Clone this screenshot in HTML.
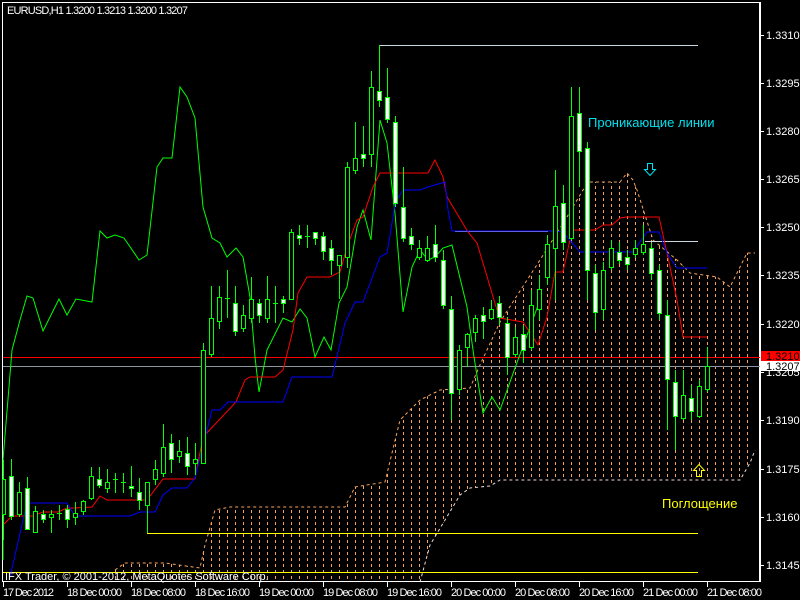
<!DOCTYPE html>
<html><head><meta charset="utf-8"><style>
html,body{margin:0;padding:0;background:#000;width:800px;height:600px;overflow:hidden}
svg{display:block}
text{font-family:"Liberation Sans",sans-serif;font-size:11px;fill:#fff}
</style></head><body>
<svg width="800" height="600" xmlns="http://www.w3.org/2000/svg">
<defs>
<pattern id="cl" width="8" height="6" patternUnits="userSpaceOnUse" x="3" y="0">
<rect x="0" y="0" width="1" height="3" fill="#f4a460"/>
</pattern>
</defs>
<rect width="800" height="600" fill="#000"/>
<polygon fill="url(#cl)" points="115,570 125,563 165,563 200,568 205,545 215,510 230,507 345,507 355,487 385,482 400,420 420,400 440,390 470,388 480,365 500,322 540,260 567,217 583,190 590,182 620,182 627,173 633,180 637,190 653,240 677,260 690,273 717,277 730,287 747,253 755,253 755,450 750,463 740,480 500,480 490,486 470,488 460,495 430,545 420,582 115,582"/>
<polyline fill="none" stroke="#f4a460" stroke-dasharray="3,3" points="115,570 125,563 165,563 200,568 205,545 215,510 230,507 345,507 355,487 385,482 400,420 420,400 440,390 470,388 480,365 500,322 540,260 567,217 583,190 590,182 620,182 627,173 633,180 637,190 653,240 677,260 690,273 717,277 730,287 747,253 755,253"/>
<polyline fill="none" stroke="#f0d8d8" stroke-dasharray="3,3" points="420,582 430,545 460,495 470,488 490,486 500,480 740,480 750,463 755,450"/>
<rect x="2.5" y="2.5" width="757" height="579" fill="none" stroke="#fff"/>
<line x1="3" y1="357.5" x2="760" y2="357.5" stroke="#ff0000"/>
<line x1="3" y1="366.5" x2="760" y2="366.5" stroke="#8c96a0"/>
<polyline fill="none" stroke="#c8d8e0" points="379.5,60 379.5,45.5 698,45.5"/>
<line x1="455" y1="231.5" x2="548" y2="231.5" stroke="#c0c0c0"/>
<line x1="645" y1="241.5" x2="698" y2="241.5" stroke="#c8d8e0"/>
<polyline fill="none" stroke="#ffff00" points="147.5,510 147.5,533.5 698,533.5"/>
<line x1="3" y1="572.5" x2="698" y2="572.5" stroke="#ffff00"/>
<polyline fill="none" stroke="#00ff00" points="3,560 3,460 12,350 20,320 27,296 33,298 43,331 59,299 67,315 76,299 92,302 100,231 107,238 115,235 124,238 139,260 147,255 157,167 163,158 172,158 180,87 187,97 195,118 203,207 212,238 220,243 227,257 236,248 243,257 250,297 255,357 259,392 267,350 283,318 292,322 300,309 307,318 315,357 324,337 331,350 339,303 347,287 357,227 363,210 371,240 380,120 387,143 395,213 403,312 412,267 420,250 428,260 435,257 443,248 452,245 467,307 474,357 483,413 492,397 500,410 515,368 540,300"/>
<polyline fill="none" stroke="#ff0000" points="3,525 12,516 33,516 43,512 58,512 67,508 75,508 92,507 100,496 107,500 147,500 163,479 195,479 203,437 236,402 245,380 250,377 275,377 283,370 293,330 298,293 307,277 330,277 340,272 347,247 357,220 363,217 373,187 380,173 428,173 435,160 443,177 447,197 468,232 477,243 497,310 500,318 523,322 538,345 547,317 555,272 563,272 572,230 595,230 603,225 612,225 620,218 627,217 659,217 667,253 677,300 683,337 707,337"/>
<polyline fill="none" stroke="#0000ff" points="10,577 27,503 67,503 75,516 130,516 140,512 155,512 163,495 172,488 187,488 195,478 212,410 220,410 228,402 283,402 292,377 332,377 345,323 355,302 363,302 380,257 387,253 393,217 395,203 403,190 420,190 428,187 445,182 448,210 452,231 555,231 563,232 580,252 633,252 647,232 659,232 667,253 677,268 707,268"/>
<g stroke="#00ff00" stroke-width="1">
<line x1="3.5" y1="460" x2="3.5" y2="540"/><rect x="2.5" y="479.5" width="3" height="35" fill="#000"/>
<line x1="11.5" y1="459" x2="11.5" y2="520"/><rect x="9.5" y="476.5" width="4" height="40" fill="#fff"/>
<line x1="19.5" y1="482" x2="19.5" y2="517"/><rect x="17.5" y="492.5" width="4" height="22" fill="#000"/>
<line x1="27.5" y1="477" x2="27.5" y2="530"/><rect x="25.5" y="488.5" width="4" height="41" fill="#fff"/>
<line x1="35.5" y1="506" x2="35.5" y2="533"/><rect x="33.5" y="511.5" width="4" height="21" fill="#000"/>
<line x1="43.5" y1="510" x2="43.5" y2="523"/><rect x="41.5" y="514.5" width="4" height="5" fill="#fff"/>
<line x1="51.5" y1="510" x2="51.5" y2="533"/><rect x="49.5" y="514.5" width="4" height="3" fill="#000"/>
<line x1="59.5" y1="505" x2="59.5" y2="520"/><line x1="57" y1="513.5" x2="62" y2="513.5"/>
<line x1="67.5" y1="505" x2="67.5" y2="528"/><rect x="65.5" y="509.5" width="4" height="10" fill="#fff"/>
<line x1="75.5" y1="502" x2="75.5" y2="525"/><rect x="73.5" y="513.5" width="4" height="4" fill="#000"/>
<line x1="83.5" y1="500" x2="83.5" y2="515"/><rect x="81.5" y="501.5" width="4" height="10" fill="#000"/>
<line x1="91.5" y1="467" x2="91.5" y2="500"/><rect x="89.5" y="476.5" width="4" height="22" fill="#000"/>
<line x1="99.5" y1="467" x2="99.5" y2="488"/><rect x="97.5" y="479.5" width="4" height="6" fill="#fff"/>
<line x1="107.5" y1="469" x2="107.5" y2="493"/><rect x="105.5" y="482.5" width="4" height="6" fill="#000"/>
<line x1="115.5" y1="473" x2="115.5" y2="493"/><line x1="113" y1="479.5" x2="118" y2="479.5"/>
<line x1="123.5" y1="473" x2="123.5" y2="493"/><line x1="121" y1="482.5" x2="126" y2="482.5"/>
<line x1="131.5" y1="466" x2="131.5" y2="497"/><rect x="129.5" y="486.5" width="4" height="2" fill="#fff"/>
<line x1="139.5" y1="478" x2="139.5" y2="510"/><rect x="137.5" y="492.5" width="4" height="8" fill="#fff"/>
<line x1="147.5" y1="482" x2="147.5" y2="533"/><rect x="145.5" y="482.5" width="4" height="23" fill="#000"/>
<line x1="155.5" y1="460" x2="155.5" y2="485"/><rect x="153.5" y="469.5" width="4" height="10" fill="#000"/>
<line x1="163.5" y1="424" x2="163.5" y2="477"/><rect x="161.5" y="447.5" width="4" height="26" fill="#000"/>
<line x1="171.5" y1="434" x2="171.5" y2="473"/><rect x="169.5" y="443.5" width="4" height="16" fill="#fff"/>
<line x1="179.5" y1="440" x2="179.5" y2="463"/><rect x="177.5" y="451.5" width="4" height="5" fill="#000"/>
<line x1="187.5" y1="437" x2="187.5" y2="475"/><rect x="185.5" y="453.5" width="4" height="13" fill="#fff"/>
<line x1="195.5" y1="443" x2="195.5" y2="475"/><rect x="193.5" y="459.5" width="4" height="4" fill="#000"/>
<line x1="203.5" y1="343" x2="203.5" y2="463"/><rect x="201.5" y="350.5" width="4" height="113" fill="#000"/>
<line x1="211.5" y1="286" x2="211.5" y2="357"/><rect x="209.5" y="318.5" width="4" height="36" fill="#000"/>
<line x1="219.5" y1="286" x2="219.5" y2="329"/><rect x="217.5" y="297.5" width="4" height="24" fill="#000"/>
<line x1="227.5" y1="270" x2="227.5" y2="318"/><line x1="225" y1="298.5" x2="230" y2="298.5"/>
<line x1="235.5" y1="286" x2="235.5" y2="336"/><rect x="233.5" y="303.5" width="4" height="28" fill="#fff"/>
<line x1="243.5" y1="305" x2="243.5" y2="332"/><rect x="241.5" y="315.5" width="4" height="13" fill="#000"/>
<line x1="251.5" y1="277" x2="251.5" y2="323"/><rect x="249.5" y="299.5" width="4" height="19" fill="#000"/>
<line x1="259.5" y1="299" x2="259.5" y2="323"/><rect x="257.5" y="303.5" width="4" height="12" fill="#fff"/>
<line x1="267.5" y1="276" x2="267.5" y2="323"/><rect x="265.5" y="299.5" width="4" height="19" fill="#000"/>
<line x1="275.5" y1="286" x2="275.5" y2="323"/><line x1="273" y1="303.5" x2="278" y2="303.5"/>
<line x1="283.5" y1="296" x2="283.5" y2="313"/><rect x="281.5" y="299.5" width="4" height="4" fill="#fff"/>
<line x1="291.5" y1="229" x2="291.5" y2="299"/><rect x="289.5" y="232.5" width="4" height="67" fill="#000"/>
<line x1="299.5" y1="225" x2="299.5" y2="245"/><rect x="297.5" y="235.5" width="4" height="3" fill="#fff"/>
<line x1="307.5" y1="225" x2="307.5" y2="248"/><line x1="305" y1="236.5" x2="310" y2="236.5"/>
<line x1="315.5" y1="232" x2="315.5" y2="245"/><rect x="313.5" y="232.5" width="4" height="6" fill="#fff"/>
<line x1="323.5" y1="232" x2="323.5" y2="260"/><rect x="321.5" y="236.5" width="4" height="15" fill="#fff"/>
<line x1="331.5" y1="240" x2="331.5" y2="275"/><rect x="329.5" y="248.5" width="4" height="12" fill="#fff"/>
<line x1="339.5" y1="255" x2="339.5" y2="299"/><rect x="337.5" y="255.5" width="4" height="10" fill="#000"/>
<line x1="347.5" y1="162" x2="347.5" y2="268"/><rect x="345.5" y="167.5" width="4" height="90" fill="#000"/>
<line x1="355.5" y1="122" x2="355.5" y2="174"/><rect x="353.5" y="158.5" width="4" height="12" fill="#000"/>
<line x1="363.5" y1="126" x2="363.5" y2="167"/><rect x="361.5" y="154.5" width="4" height="4" fill="#fff"/>
<line x1="371.5" y1="71" x2="371.5" y2="167"/><rect x="369.5" y="87.5" width="4" height="67" fill="#000"/>
<line x1="379.5" y1="45" x2="379.5" y2="107"/><rect x="377.5" y="91.5" width="4" height="9" fill="#fff"/>
<line x1="387.5" y1="68" x2="387.5" y2="123"/><rect x="385.5" y="97.5" width="4" height="22" fill="#fff"/>
<line x1="395.5" y1="116" x2="395.5" y2="207"/><rect x="393.5" y="122.5" width="4" height="81" fill="#fff"/>
<line x1="403.5" y1="167" x2="403.5" y2="242"/><rect x="401.5" y="207.5" width="4" height="31" fill="#fff"/>
<line x1="411.5" y1="228" x2="411.5" y2="250"/><rect x="409.5" y="236.5" width="4" height="8" fill="#fff"/>
<line x1="419.5" y1="240" x2="419.5" y2="260"/><rect x="417.5" y="248.5" width="4" height="9" fill="#000"/>
<line x1="427.5" y1="236" x2="427.5" y2="262"/><rect x="425.5" y="248.5" width="4" height="12" fill="#000"/>
<line x1="435.5" y1="225" x2="435.5" y2="262"/><rect x="433.5" y="244.5" width="4" height="13" fill="#fff"/>
<line x1="443.5" y1="250" x2="443.5" y2="309"/><rect x="441.5" y="260.5" width="4" height="45" fill="#fff"/>
<line x1="451.5" y1="296" x2="451.5" y2="420"/><rect x="449.5" y="309.5" width="4" height="84" fill="#fff"/>
<line x1="459.5" y1="345" x2="459.5" y2="395"/><rect x="457.5" y="350.5" width="4" height="39" fill="#000"/>
<line x1="467.5" y1="333" x2="467.5" y2="367"/><rect x="465.5" y="334.5" width="4" height="13" fill="#000"/>
<line x1="475.5" y1="315" x2="475.5" y2="342"/><rect x="473.5" y="318.5" width="4" height="14" fill="#000"/>
<line x1="483.5" y1="307" x2="483.5" y2="339"/><rect x="481.5" y="315.5" width="4" height="6" fill="#fff"/>
<line x1="491.5" y1="300" x2="491.5" y2="320"/><rect x="489.5" y="309.5" width="4" height="9" fill="#000"/>
<line x1="499.5" y1="296" x2="499.5" y2="325"/><rect x="497.5" y="303.5" width="4" height="14" fill="#fff"/>
<line x1="507.5" y1="317" x2="507.5" y2="375"/><rect x="505.5" y="323.5" width="4" height="34" fill="#fff"/>
<line x1="515.5" y1="327" x2="515.5" y2="357"/><rect x="513.5" y="337.5" width="4" height="17" fill="#000"/>
<line x1="523.5" y1="325" x2="523.5" y2="363"/><rect x="521.5" y="334.5" width="4" height="16" fill="#fff"/>
<line x1="531.5" y1="290" x2="531.5" y2="350"/><rect x="529.5" y="305.5" width="4" height="42" fill="#000"/>
<line x1="539.5" y1="275" x2="539.5" y2="320"/><rect x="537.5" y="289.5" width="4" height="20" fill="#000"/>
<line x1="547.5" y1="235" x2="547.5" y2="285"/><rect x="545.5" y="244.5" width="4" height="33" fill="#000"/>
<line x1="555.5" y1="170" x2="555.5" y2="300"/><rect x="553.5" y="206.5" width="4" height="42" fill="#000"/>
<line x1="563.5" y1="185" x2="563.5" y2="250"/><rect x="561.5" y="203.5" width="4" height="39" fill="#fff"/>
<line x1="571.5" y1="87" x2="571.5" y2="240"/><rect x="569.5" y="116.5" width="4" height="122" fill="#000"/>
<line x1="579.5" y1="87" x2="579.5" y2="187"/><rect x="577.5" y="113.5" width="4" height="38" fill="#fff"/>
<line x1="587.5" y1="142" x2="587.5" y2="300"/><rect x="585.5" y="148.5" width="4" height="122" fill="#fff"/>
<line x1="595.5" y1="265" x2="595.5" y2="330"/><rect x="593.5" y="273.5" width="4" height="39" fill="#fff"/>
<line x1="603.5" y1="262" x2="603.5" y2="320"/><rect x="601.5" y="270.5" width="4" height="39" fill="#000"/>
<line x1="611.5" y1="240" x2="611.5" y2="270"/><rect x="609.5" y="248.5" width="4" height="19" fill="#000"/>
<line x1="619.5" y1="242" x2="619.5" y2="264"/><rect x="617.5" y="252.5" width="4" height="8" fill="#fff"/>
<line x1="627.5" y1="250" x2="627.5" y2="270"/><rect x="625.5" y="257.5" width="4" height="7" fill="#fff"/>
<line x1="635.5" y1="240" x2="635.5" y2="258"/><rect x="633.5" y="248.5" width="4" height="6" fill="#000"/>
<line x1="643.5" y1="225" x2="643.5" y2="255"/><rect x="641.5" y="244.5" width="4" height="8" fill="#000"/>
<line x1="651.5" y1="243" x2="651.5" y2="280"/><rect x="649.5" y="248.5" width="4" height="25" fill="#fff"/>
<line x1="659.5" y1="265" x2="659.5" y2="320"/><rect x="657.5" y="270.5" width="4" height="43" fill="#fff"/>
<line x1="667.5" y1="300" x2="667.5" y2="430"/><rect x="665.5" y="315.5" width="4" height="64" fill="#fff"/>
<line x1="675.5" y1="370" x2="675.5" y2="450"/><rect x="673.5" y="382.5" width="4" height="34" fill="#fff"/>
<line x1="683.5" y1="370" x2="683.5" y2="420"/><rect x="681.5" y="395.5" width="4" height="23" fill="#000"/>
<line x1="691.5" y1="385" x2="691.5" y2="420"/><rect x="689.5" y="398.5" width="4" height="13" fill="#fff"/>
<line x1="699.5" y1="380" x2="699.5" y2="418"/><rect x="697.5" y="386.5" width="4" height="30" fill="#000"/>
<line x1="707.5" y1="347" x2="707.5" y2="392"/><rect x="705.5" y="366.5" width="4" height="23" fill="#000"/>
</g>
<text x="588" y="127" style="font-size:13px;fill:#00e0ee">Проникающие линии</text>
<polygon points="647.5,163.5 652.5,163.5 652.5,169.5 655.5,169.5 650,175.5 644.5,169.5 647.5,169.5" fill="none" stroke="#00e0ee"/>
<text x="662" y="508" style="font-size:13px;fill:#ffff00">Поглощение</text>
<polygon points="696.5,476.5 701.5,476.5 701.5,470.5 704.5,470.5 699,464.5 693.5,470.5 696.5,470.5" fill="none" stroke="#ffff00"/>
<text x="7" y="14" textLength="181">EURUSD,H1  1.3200 1.3213 1.3200 1.3207</text>
<text x="5" y="580">IFX Trader, © 2001-2012, MetaQuotes Software Corp.</text>
<g stroke="#fff">
<line x1="760.5" y1="2" x2="760.5" y2="582"/>
<line x1="760" y1="35.5" x2="764" y2="35.5"/><line x1="760" y1="83.5" x2="764" y2="83.5"/>
<line x1="760" y1="131.5" x2="764" y2="131.5"/><line x1="760" y1="179.5" x2="764" y2="179.5"/>
<line x1="760" y1="227.5" x2="764" y2="227.5"/><line x1="760" y1="275.5" x2="764" y2="275.5"/>
<line x1="760" y1="324.5" x2="764" y2="324.5"/><line x1="760" y1="372.5" x2="764" y2="372.5"/>
<line x1="760" y1="420.5" x2="764" y2="420.5"/><line x1="760" y1="469.5" x2="764" y2="469.5"/>
<line x1="760" y1="517.5" x2="764" y2="517.5"/><line x1="760" y1="565.5" x2="764" y2="565.5"/>
</g>
<text x="766" y="39">1.3310</text><text x="766" y="87">1.3295</text>
<text x="766" y="135">1.3280</text><text x="766" y="183">1.3265</text>
<text x="766" y="231">1.3250</text><text x="766" y="279">1.3235</text>
<text x="766" y="328">1.3220</text><text x="766" y="376">1.3205</text>
<text x="766" y="424">1.3190</text><text x="766" y="473">1.3175</text>
<text x="766" y="521">1.3160</text><text x="766" y="569">1.3145</text>
<rect x="761" y="351" width="39" height="10" fill="#ff0000"/>
<text x="766" y="360" style="fill:#000">1.3210</text>
<rect x="761" y="361" width="39" height="10" fill="#fff"/>
<text x="766" y="370" style="fill:#000">1.3207</text>
<g stroke="#fff">
<line x1="3.5" y1="582" x2="3.5" y2="587"/><line x1="67.5" y1="582" x2="67.5" y2="587"/>
<line x1="131.5" y1="582" x2="131.5" y2="587"/><line x1="195.5" y1="582" x2="195.5" y2="587"/>
<line x1="259.5" y1="582" x2="259.5" y2="587"/><line x1="323.5" y1="582" x2="323.5" y2="587"/>
<line x1="387.5" y1="582" x2="387.5" y2="587"/><line x1="451.5" y1="582" x2="451.5" y2="587"/>
<line x1="515.5" y1="582" x2="515.5" y2="587"/><line x1="579.5" y1="582" x2="579.5" y2="587"/>
<line x1="643.5" y1="582" x2="643.5" y2="587"/><line x1="707.5" y1="582" x2="707.5" y2="587"/>
</g>
<g style="font-size:10.5px">
<text x="3" y="596" textLength="51">17 Dec 2012</text><text x="67" y="596" textLength="55">18 Dec 00:00</text>
<text x="131" y="596" textLength="55">18 Dec 08:00</text><text x="195" y="596" textLength="55">18 Dec 16:00</text>
<text x="259" y="596" textLength="55">19 Dec 00:00</text><text x="323" y="596" textLength="55">19 Dec 08:00</text>
<text x="387" y="596" textLength="55">19 Dec 16:00</text><text x="451" y="596" textLength="55">20 Dec 00:00</text>
<text x="515" y="596" textLength="55">20 Dec 08:00</text><text x="579" y="596" textLength="55">20 Dec 16:00</text>
<text x="643" y="596" textLength="55">21 Dec 00:00</text><text x="707" y="596" textLength="55">21 Dec 08:00</text>
</g>
</svg>
</body></html>
